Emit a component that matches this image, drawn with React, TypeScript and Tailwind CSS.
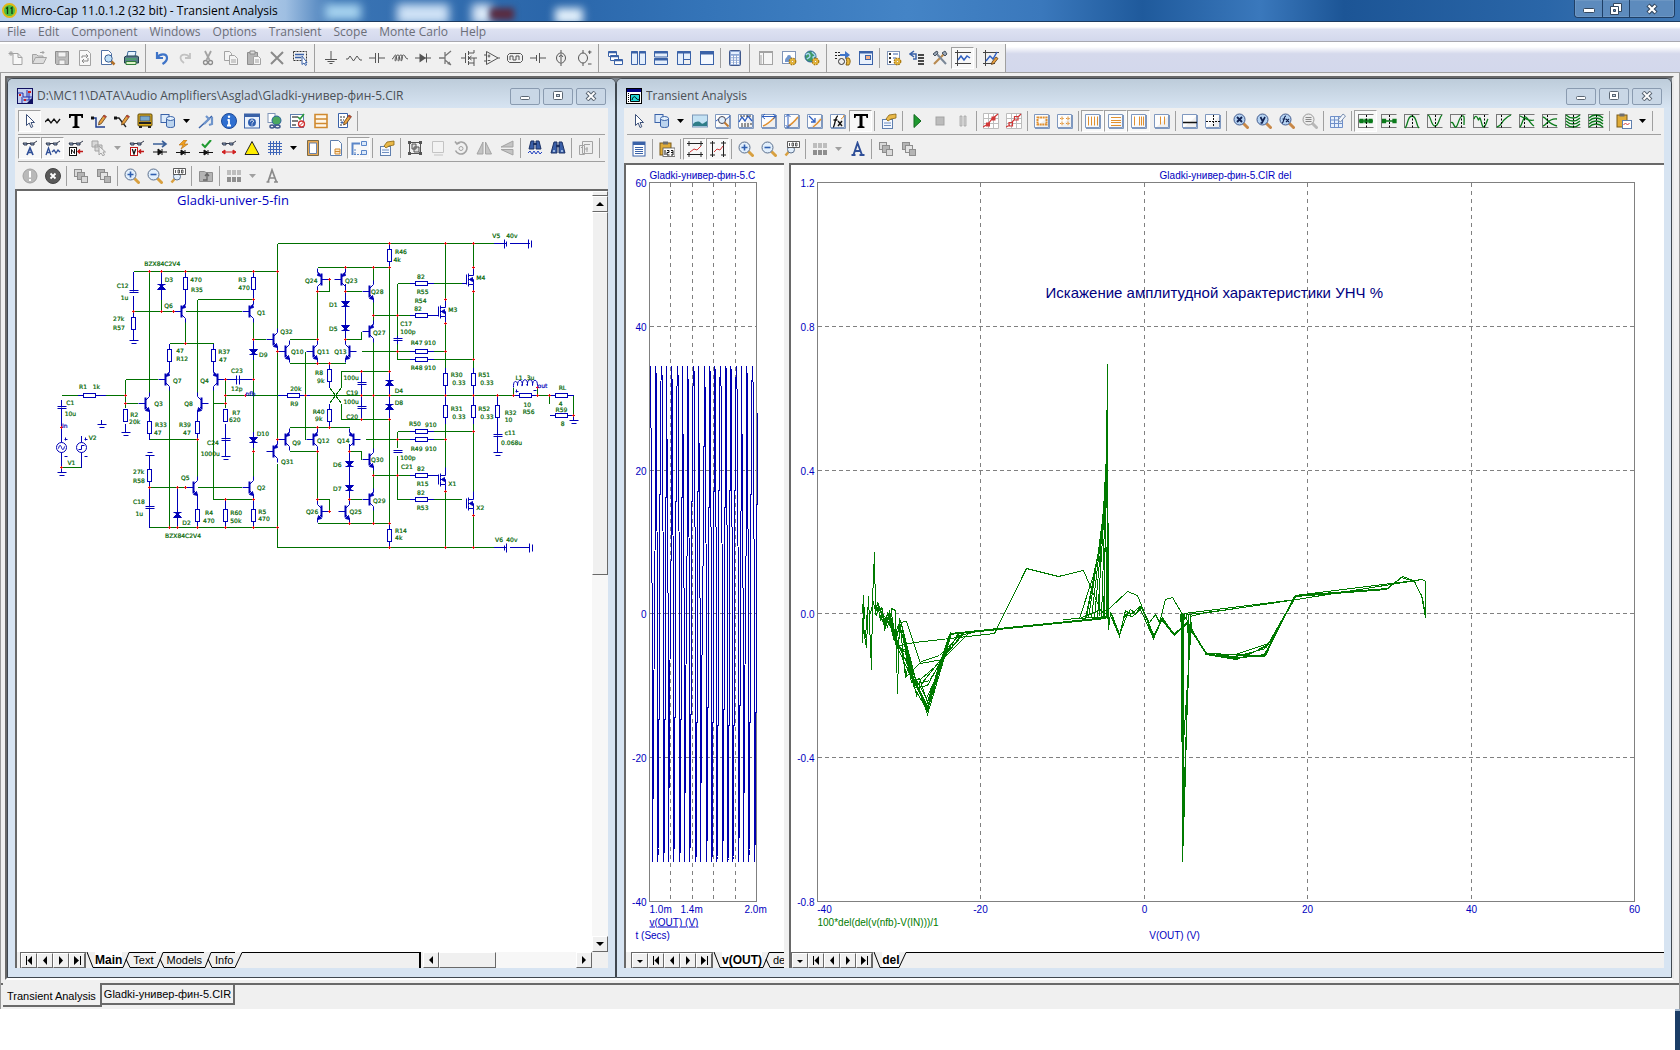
import type { ReactNode } from 'react'
import clsx from 'clsx'

/* ---------- icons, all drawn on a 16x16 grid ---------- */

const GLOBE = (
    <>
        <circle cx="6.5" cy="6.5" r="5.5" fill="#3f9a6a" stroke="#2b5f9e" />
        <path d="M2 5c2-3 4-1 4 1s-2 2-3 3M8 2c1 2 3 2 3 4l-2 1 1 3" fill="none" stroke="#a9d7f5" strokeWidth="1.4" />
    </>
)

const GEAR = (
    <>
        <circle cx="11.5" cy="11.5" r="3" fill="#f0c040" stroke="#b07d10" strokeWidth="1.8" strokeDasharray="1.6 .8" />
        <circle cx="11.5" cy="11.5" r="2.4" fill="#f0c040" />
        <circle cx="11.5" cy="11.5" r="1.1" fill="#fff" stroke="#b07d10" strokeWidth=".6" />
    </>
)

const PENCIL = (
    <>
        <path d="M8 9l5-7 2.4 1.6-5 7L7.6 12z" fill="#e8a040" stroke="#5a3a14" strokeWidth=".8" />
        <path d="M13 2l2.4 1.6-1 1.4-2.4-1.6z" fill="#b8433a" />
    </>
)

const FRAME = <path d="M.5 1.5h14v13H.5zM1 15.5h14.5V2" fill="#fdfdfd" stroke="#7f98bf" />

const GLASSES = <path d="M1 3h4v2H2zM8 3h4v2H9zM5 3.5h3M12 3l3-2" fill="#9ab0d0" stroke="#20283c" strokeWidth=".9" />

const PROPS = (
    <>
        <rect x="1.5" y="6.5" width="10" height="9" fill="#f4f8ff" stroke="#5f7fae" />
        <path d="M3 10h7M3 12.5h7" stroke="#6f8fc0" />
        <path d="M5 6l3-4 7-1v4l-5 1-3 2z" fill="#e8b848" stroke="#8a6410" strokeWidth=".8" />
    </>
)

function magnifier(inner: ReactNode, handle = '#d8a040', rim = '#5b6f8c', glass = '#e2effc') {
    return (
        <>
            <path d="M10.5 10.5l4 4" stroke={handle} strokeWidth="3" strokeLinecap="round" />
            <circle cx="6.5" cy="6.5" r="5.5" fill={glass} stroke={rim} />
            {inner}
        </>
    )
}

function frame(inner: ReactNode) {
    return (
        <>
            {FRAME}
            {inner}
        </>
    )
}

/* green curve with a dashed cursor, used by the cursor-mode buttons */
function curve(d: string, cursor = 8) {
    return (
        <>
            <path d="M.5 1v14M1 14.5h14.5M1 1.5h14.5" stroke="#777" fill="none" />
            <path d={d} stroke="#0a7a1a" strokeWidth="1.3" fill="none" />
            <path d={`M${cursor}.5 2v13`} stroke="#000" strokeDasharray="2 1.5" />
        </>
    )
}

function stack(a: string, b: string) {
    return (
        <>
            <rect x="1.5" y="1.5" width="7" height="7" fill={a} stroke="#8d8d8d" />
            <rect x="4.5" y="4.5" width="7" height="7" fill={b} stroke="#8d8d8d" />
            <rect x="8.5" y="8.5" width="6" height="6" fill={a} stroke="#8d8d8d" />
        </>
    )
}

const G = '#a3a3a3'
const B = '#3a62a8'
const K = '#555'

const ICONS: Record<string, ReactNode> = {
    new: <path d="M5 3.5h5l4 4v7H5zM10 3.5v4h4M3 1v5M.5 3.5h5M1.3 1.8l3.4 3.4M4.7 1.8L1.3 5.2" fill="#f8f8f8" stroke={G} />,
    open: (
        <>
            <path d="M1.5 13.5v-9h4L7 6h5v2" fill="#d4d4d4" stroke={G} />
            <path d="M1.5 13.5l3-6h11l-3 6zM9 2.5h4L11.5 1M13 2.5L11.5 4" fill="#ddd" stroke={G} />
        </>
    ),
    save: (
        <>
            <path d="M1.5 1.5h13v13h-12l-1-1z" fill="#bcbcbc" stroke="#8e8e8e" />
            <path d="M4 2h8v5H4zM5 10h6v4.5H5z" fill="#f2f2f2" stroke={G} />
        </>
    ),
    reload: (
        <>
            <path d="M2.5.5h8l3 3v12h-11z" fill="#f8f8f8" stroke={G} />
            <path d="M5 8V6h5M9 4l2 2-2 2M11 8v3H6M7 9l-2 2 2 2" fill="none" stroke="#888" />
        </>
    ),
    preview: (
        <>
            <path d="M1.5.5h7l3 3v11h-10z" fill="#fff" stroke="#4f6fa3" />
            <path d="M11 11l3.5 3.5" stroke="#b0702a" strokeWidth="2.5" />
            <circle cx="8.5" cy="8.5" r="3.7" fill="#bfe0f8" stroke="#3c5f94" />
        </>
    ),
    print: (
        <>
            <path d="M5 1.5h8l-1 5H4z" fill="#e6f3ff" stroke="#3e6a9a" />
            <path d="M1.5 7l2-1h11l1 1v6h-14z" fill="#5a7a8c" stroke="#23404f" />
            <path d="M3 11.5h10v3H3z" fill="#dff3c8" stroke="#2f7d3a" />
            <path d="M2.5 9h11" stroke="#44c05a" />
        </>
    ),
    undo: <path d="M3 2v6h6M3.5 7.5c2-4 9.5-4.5 9.5.5 0 3-2 4.5-4.5 6" fill="none" stroke="#3f74c8" strokeWidth="2.2" />,
    redo: <path d="M13 3v5H8M12.5 7.5c-2-4-9-4-9 .5 0 2.5 1.5 3.5 3.5 5" fill="none" stroke="#c2c2c2" strokeWidth="1.8" />,
    cut: (
        <>
            <path d="M5 1l4.5 9M11 1L6.500 10" stroke={G} strokeWidth="1.8" fill="none" />
            <path d="M3.5 12.5a2 2 0 104 0 2 2 0 10-4 0M8.500 12.5a2 2 0 104 0 2 2 0 10-4 0" stroke="#8d8d8d" fill="none" strokeWidth="1.3" />
        </>
    ),
    copy: (
        <>
            <path d="M1.5 1.5h5l2 2v7h-7z" fill="#f4f4f4" stroke={G} />
            <path d="M6.500 5.5h5l3 3v6h-8zM8 10h5M8 12h5" fill="#f4f4f4" stroke={G} />
        </>
    ),
    paste: (
        <>
            <path d="M1.5 2.5h10v12h-10z" fill="#b5b5b5" stroke="#8d8d8d" />
            <path d="M4 1h5v3H4z" fill="#ddd" stroke="#8d8d8d" />
            <path d="M7.5 6.5h5l2 2v6h-7zM9 10h4M9 12h4" fill="#f6f6f6" stroke={G} />
        </>
    ),
    delete: <path d="M2 2l12 12M14 2L2 14" stroke="#8a8a8a" strokeWidth="2" />,
    select: (
        <>
            <path d="M1.5 1.5h13v9h-13z" fill="none" stroke="#333" strokeDasharray="2 1" />
            <path d="M3 4.5h9M3 7.5h6" stroke={B} strokeWidth="1.5" />
            <path d="M10 6v8.5l2-1.500 1.500 2.500 1-.5-1-2.500H15z" fill="#fff" stroke={B} />
        </>
    ),
    ground: <path d="M8 1v8M2 9.5h12M4.5 11.5h7M6.500 13.5h3" stroke={K} fill="none" />,
    resistor: <path d="M0 9h2l2-3 3.5 5L11 6l3 4h2" stroke={K} fill="none" />,
    capacitor: <path d="M0 8h6M10 8h6M6.500 3v10M9.500 3v10" stroke={K} fill="none" />,
    inductor: <path d="M0 9c2 0 2-4 3.5-4s1 6 0 6 0-6 2.5-6 1.500 6 .5 6 0-6 2.5-6 1 6 .3 6 0-6 2.200-6S13 9 16 9" stroke={K} fill="none" />,
    diode: (
        <>
            <path d="M0 8h16M11.5 3.5v9" stroke={K} />
            <path d="M4.5 3.5v9L11 8z" fill={K} />
        </>
    ),
    bjt: (
        <>
            <path d="M1 8h6M7 2v12M7 6l6-5M7 10l6 5" stroke="#777" fill="none" strokeWidth="1.3" />
            <path d="M13 15l-4-1 2.5-2.500z" fill="#777" />
        </>
    ),
    mosfet: <path d="M0 8h4.500M4.500 3v10M7.500 1v4M7.500 6v4M7.500 11v4M8 3h5V0M8 13h5v3M8 8h8M13 8v5M10.500 6L8 8l2.500 2" stroke={K} fill="none" />,
    opamp: <path d="M2.500 1.500v13L14 8zM0 5h3M0 11h3M14 8h2M5 4.500v3M3.700 6h2.600M3.700 10.500h2.600" stroke={K} fill="none" />,
    pulse: <path d="M.5 5.500l2-2h11l2 2v5l-2 2h-11l-2-2zM3 10V6h3v4h3V6h3v4" stroke={K} fill="none" />,
    battery: <path d="M0 8h6M10 8h6M6.500 5v6M9.500 3v10" stroke={K} fill="none" />,
    isource: <path d="M8 0v3M8 13v3M3.500 8a4.500 5 0 109 0 4.500 5 0 10-9 0M8 12V5M6 7l2-2.500L10 7" stroke={K} fill="none" />,
    vsource: <path d="M7 0v3M7 13v3M2.500 8a4.500 5 0 109 0 4.500 5 0 10-9 0M12 2h3.500M13.700.5v3.500M12 14h3.500" stroke={K} fill="none" />,
    cascade: (
        <>
            <path d="M1.500 1.500h8v5h-8zM3.500 5.500h8v5h-8zM7.500 9.500h8v5h-8z" fill="#fff" stroke={B} />
            <path d="M1.500 2.500h8M3.500 6.500h8M7.500 10.500h8" stroke={B} strokeWidth="1.500" />
        </>
    ),
    tileV: (
        <>
            <path d="M1.500 1.500h6v13h-6zM9.500 1.500h6v13h-6z" fill="#e4eefb" stroke={B} />
            <path d="M1 2.500h7M9 2.500h7" stroke={B} strokeWidth="2" />
        </>
    ),
    tileH: (
        <>
            <path d="M1.500 1.500h13V7h-13zM1.500 8.500h13v6h-13z" fill="#e4eefb" stroke={B} />
            <path d="M1 2.500h14M1 9.500h14" stroke={B} strokeWidth="2" />
        </>
    ),
    overlap: (
        <>
            <path d="M1.500 1.500h6v13h-6zM7.500 1.500h7v8h-7z" fill="#e4eefb" stroke={B} />
            <path d="M1.500 14.500h13v-5" fill="none" stroke={B} />
            <path d="M1 2.500h14" stroke={B} strokeWidth="2" />
        </>
    ),
    maximize: (
        <>
            <rect x="1.500" y="1.500" width="13" height="13" fill="#f4f8fe" stroke={B} />
            <path d="M1 3h14" stroke={B} strokeWidth="3" />
        </>
    ),
    calc: (
        <>
            <rect x="2.500" y=".5" width="11" height="15" rx="1" fill="#8ea8d4" stroke="#41598c" />
            <path d="M4 3h8" stroke="#e4f0ff" strokeWidth="2" />
            <path d="M4 6.500h8M4 9h8M4 11.500h8M4 13.500h8" stroke="#fff" strokeWidth="1.400" strokeDasharray="2 1" />
        </>
    ),
    sidebar: (
        <>
            <rect x="1.500" y="1.500" width="13" height="13" fill="#f6f6f6" stroke={G} />
            <path d="M1 2.500h14M5.500 3v12M3 5v9" stroke={G} />
        </>
    ),
    partGear: (
        <>
            <rect x="1.500" y="1.500" width="13" height="12" fill="#fff" stroke="#8095b8" />
            <path d="M4 12c0-4 1-4 2-5a2 2 0 114 0c1 1 2 1 2 5z" fill="#6f95cc" />
            {GEAR}
        </>
    ),
    globeGear: (
        <>
            {GLOBE}
            {GEAR}
        </>
    ),
    run: (
        <>
            <path d="M0 2.500h5M0 5.500h5M0 8.500h3" stroke="#222" strokeDasharray="2 1" />
            <path d="M5 4h5V1l5 4-5 4V6H5z" fill="#3f74c8" />
            <circle cx="6.500" cy="11.500" r="3" fill="#eee" stroke="#333" />
            <path d="M11 8h3c2 3 1 5 0 7h-3c1-3 1-4 0-7z" fill="#e8b840" stroke="#8a6410" />
        </>
    ),
    windowDot: (
        <>
            <rect x="1.500" y="1.500" width="13" height="13" fill="#e9f1fc" stroke={B} />
            <path d="M1 2.500h14" stroke={B} strokeWidth="2" />
            <rect x="7.500" y="5.500" width="5" height="4" fill="#f4b088" stroke={B} />
        </>
    ),
    listGear: (
        <>
            <rect x="1.500" y="1.500" width="12" height="13" fill="#fff" stroke="#8095b8" />
            <path d="M3 4h2M3 8h2M3 12h2" stroke="#333" strokeWidth="2" />
            <path d="M7 4h5M7 8h3" stroke={B} />
            {GEAR}
        </>
    ),
    back: (
        <>
            <path d="M5 1L1 4l4 3M2 4h5v5H4" stroke={B} strokeWidth="1.500" fill="none" />
            <path d="M9 5h6M9 8h6M9 11h6M9 14h6" stroke="#111" strokeWidth="1.300" />
        </>
    ),
    tools: (
        <>
            <path d="M2 14L12 4" stroke="#b88a50" strokeWidth="2.200" />
            <path d="M3 2l11 12" stroke="#7a8797" strokeWidth="2" />
            <path d="M1 4l4-3 1 2-3 3zM10 3l3-2 2 3-2 2z" fill="#9aa6b6" stroke="#485462" />
        </>
    ),
    plot: (
        <>
            <path d="M2.500 0v16M0 2.500h16M0 13.500h16" stroke="#444" fill="none" />
            <path d="M3 10l3-4 3 4 3-4 3 2" stroke="#2f5fc0" fill="none" strokeWidth="1.500" />
        </>
    ),
    plotEdit: (
        <>
            <path d="M2.500 0v16M0 2.500h16M0 13.500h12" stroke="#444" fill="none" />
            <path d="M3 11l4-5 3 3 4-7" stroke="#2f5fc0" fill="none" strokeWidth="1.500" />
            <path d="M9 12l4-5 2 1.500-4 5-2.500 1z" fill="#e8a040" stroke="#5a3a14" strokeWidth=".8" />
        </>
    ),
    cursor: <path d="M4.500 1.500v11l2.700-2.500 1.800 4.500 1.800-.8L9 9.500h3.500z" fill="#fff" stroke="#3b4f78" />,
    wire: <path d="M0 9l3-3 3 4 3-4 3 4 3-4" stroke="#111" fill="none" strokeWidth="1.300" />,
    text: <path d="M1 1h14v4h-1.500L13 3h-3.500v10l2 .8V15h-7v-1.200l2-.8V3H3l-.5 2H1z" fill="#000" />,
    wirePencil: (
        <>
            <path d="M1 5h4v9h9" stroke="#1f3f90" fill="none" strokeWidth="1.500" />
            <path d="M0 3.500h3v3H0z" fill="#111" />
            {PENCIL}
        </>
    ),
    linePencil: (
        <>
            <path d="M1 5h4l3 4 4 5" stroke="#222" fill="none" strokeWidth="1.300" />
            <path d="M0 3.500h3v3H0z" fill="#111" />
            {PENCIL}
        </>
    ),
    bus: (
        <>
            <rect x="1" y="1" width="14" height="12" rx="1" fill="#e0b020" stroke="#5c4708" />
            <rect x="3" y="3" width="10" height="5" fill="#78a8cc" stroke="#444" strokeWidth=".7" />
            <path d="M2 10h12" stroke="#222" strokeWidth="2" />
            <path d="M2 13h3v2H2zM11 13h3v2h-3z" fill="#222" />
        </>
    ),
    shapes: (
        <>
            <rect x="1" y="1.500" width="8" height="8" fill="#dceafa" stroke={B} />
            <path d="M6.500 6v7c0 2 8 2 8 0V5" fill="#bcd4ee" stroke={B} />
            <ellipse cx="10.500" cy="5.500" rx="4" ry="2" fill="#e6f2fd" stroke={B} />
        </>
    ),
    flag: (
        <>
            <path d="M1 15L14 3" stroke="#3a62a8" strokeWidth="1.500" />
            <path d="M8 3l3 3-5 5M11 12l3-1V4" stroke="#6f95cc" fill="none" strokeWidth="2.200" />
        </>
    ),
    info: (
        <>
            <circle cx="8" cy="8" r="7.500" fill="#2f6fd0" stroke="#1d4a98" />
            <path d="M8 6.500v6M6.500 7h2M6 12.500h4" stroke="#fff" strokeWidth="1.800" />
            <circle cx="8" cy="3.800" r="1.200" fill="#fff" />
        </>
    ),
    help: (
        <>
            <rect x=".5" y="1" width="15" height="14" fill="#e9f1fc" stroke={B} />
            <path d="M.5 2.500h15" stroke={B} strokeWidth="3" />
            <circle cx="8" cy="9.500" r="4" fill="#2f5fb0" />
            <path d="M6.500 8.500c0-2 3-2 3 0 0 1-1.500 1-1.500 2M8 11.500v1" stroke="#fff" fill="none" />
        </>
    ),
    globeLink: (
        <>
            <rect x="1" y=".5" width="7" height="9" fill="#fff" stroke="#8095b8" />
            <circle cx="9.500" cy="7.500" r="4.500" fill="#4aa860" stroke="#2b5f9e" />
            <path d="M3 13.500c0-2 4-2 4 0s-4 2-4 0M8 13.500c0-2 5-2 5 0s-5 2-5 0" fill="none" stroke="#41598c" strokeWidth="1.500" />
        </>
    ),
    checkList: (
        <>
            <rect x=".5" y="1.500" width="13" height="13" fill="#fff" stroke="#5f7fae" />
            <path d="M2 4h6M2 8h6M2 12h4" stroke="#555" strokeWidth="1.300" />
            <path d="M8 4l2 2 4-5" stroke="#2a9a3a" fill="none" strokeWidth="1.600" />
            <circle cx="11.500" cy="11" r="3" fill="#fff" stroke="#d03030" strokeWidth="1.300" />
            <path d="M9.500 13l4-4" stroke="#d03030" />
        </>
    ),
    rows: <path d="M2 1.500h12v13H2zM2 6h12M2 10.500h12" fill="#fff6e8" stroke="#d08a30" strokeWidth="1.600" />,
    docPencil: (
        <>
            <path d="M2.500.5h9v14h-9z" fill="#fff" stroke={B} />
            <path d="M4 4h6M4 7h4M4 12h3" stroke="#333" strokeDasharray="2 1" />
            <path d="M6 8v3M4.500 9.500h3" stroke={B} />
            {PENCIL}
        </>
    ),
    glassesA: (
        <>
            {GLASSES}
            <path d="M5 15l3-7 3 7M6.300 12.500h3.500" stroke="#2f4f98" fill="none" strokeWidth="1.700" />
        </>
    ),
    glassesAw: (
        <>
            {GLASSES}
            <path d="M1 15l2.500-7L6 15M2 12.500h3M7 12l2-2 2 3 2-3 2 2" stroke="#2f4f98" fill="none" strokeWidth="1.300" />
        </>
    ),
    glassesN: (
        <>
            {GLASSES}
            <rect x="1.500" y="7.500" width="7" height="8" fill="#fff" stroke="#111" />
            <path d="M3.500 14V9.500l3 4V9" stroke="#111" fill="none" />
            <path d="M15 11.500h-5M12 9.500l-2 2 2 2" stroke="#c01818" fill="none" strokeWidth="1.500" />
        </>
    ),
    glassesV: (
        <>
            {GLASSES}
            <rect x="1.500" y="7.500" width="7" height="8" fill="#fff" stroke="#c01818" />
            <path d="M3.300 9L5 14l1.700-5" stroke="#111" fill="none" strokeWidth="1.300" />
            <path d="M15 11.500h-5M12 9.500l-2 2 2 2" stroke="#c01818" fill="none" strokeWidth="1.500" />
        </>
    ),
    ghostCursor: (
        <>
            <path d="M1 1h6v6H1zM4 5h7v6H4z" fill="#d8d8d8" stroke={G} />
            <path d="M8 6v9l2-2 2 3 1.500-1-1.500-3h2.500z" fill="#eee" stroke={G} />
        </>
    ),
    current: (
        <>
            <path d="M1 4h12M10 1l4 3-4 3" stroke="#3a5f98" fill="none" strokeWidth="1.600" />
            <path d="M1 12h14M10 9v6M6 9l4 3-4 3z" stroke="#111" fill="#111" />
        </>
    ),
    power: (
        <>
            <path d="M9 0L4 5h4L6 9l7-5H9l3-4z" fill="#f0a020" stroke="#b06a10" strokeWidth=".6" />
            <path d="M1 12.500h14M10 10v5M6 10l4 2.500L6 15z" stroke="#111" fill="#111" />
        </>
    ),
    condition: (
        <>
            <path d="M4 4l3 3 6-7" stroke="#1f9a30" fill="none" strokeWidth="2" />
            <path d="M1 12.500h14M10 10v5M6 10l4 2.500L6 15z" stroke="#111" fill="#111" />
        </>
    ),
    pins: (
        <>
            {GLASSES}
            <path d="M1.500 12h13M4 10l-3 2 3 2zM12 10l3 2-3 2z" stroke="#d02020" fill="#d02020" />
        </>
    ),
    warning: <path d="M8 1.500L15 14.500H1z" fill="#ffee00" stroke="#222" />,
    grid: <path d="M1 3.500h14M1 6.500h14M1 9.500h14M1 12.500h14M3.500 1v14M6.500 1v14M9.500 1v14M12.500 1v14" stroke="#3f66b8" />,
    page: (
        <>
            <path d="M2.500.5h11v15h-11z" fill="#e8a850" stroke="#7a6a4a" />
            <path d="M4.500 3h7v10.500h-7z" fill="#fff" stroke="#6a84ae" />
        </>
    ),
    pageBlock: (
        <>
            <path d="M2.500.5h8l3 3v12h-11z" fill="#fff" stroke="#5f7fae" />
            <path d="M7 9h5v5H7zM7 11.500h5" fill="#ffe8c8" stroke="#d08a30" />
        </>
    ),
    region: (
        <>
            <path d="M1.500 15V3.500H9" stroke="#5b86c8" fill="none" strokeWidth="2" />
            <path d="M10.500 1.500h5v4h-5zM10.500 10.500h5v4h-5z" fill="#dceafa" stroke="#5b86c8" />
            <path d="M3 14.500h8M4 9v6" stroke="#5b86c8" strokeDasharray="2 1" />
        </>
    ),
    props: PROPS,
    group: (
        <>
            <path d="M2.500 2.500h11v11h-11z" fill="none" stroke="#555" />
            <path d="M5 4h4v5H5zM7 7h5v5H7z" fill="#ddd" stroke="#555" />
            <path d="M1 1h3v3H1zM12 1h3v3h-3zM1 12h3v3H1zM12 12h3v3h-3z" fill="#555" />
        </>
    ),
    blank: <path d="M2.500 1.500h11v11h-11zM4 15h9" fill="#f3f3f3" stroke="#c4c4c4" />,
    rotate: (
        <>
            <path d="M4 3.500a6 6 0 11-1.500 7M2 1.500L4 4l3-1.500" fill="none" stroke={G} strokeWidth="1.600" />
            <circle cx="8" cy="8.500" r="2" fill="none" stroke={G} />
        </>
    ),
    flipH: <path d="M7 2v12H1zM9.500 2v12h6z" fill="#c4c4c4" stroke={G} />,
    flipV: <path d="M14 7V1L2 7zM14 9.500V15L2 9.500z" fill="#c4c4c4" stroke={G} />,
    findText: (
        <>
            <path d="M4 1h3v8H2zM9 1h3l2 8H9z" fill="#3a5fa8" stroke="#1d3264" />
            <path d="M6 4h4" stroke="#1d3264" strokeWidth="2" />
            <path d="M1 13l2-2 2 3 2-3 2 3 2-3 2 3 2-2" fill="none" stroke="#2040c0" />
        </>
    ),
    find: (
        <>
            <path d="M4 2h3v11H1zM9 2h3l3 11H9z" fill="#3a5fa8" stroke="#1d3264" />
            <path d="M6 6h4" stroke="#1d3264" strokeWidth="2.500" />
            <path d="M3 11h2M11 11h2" stroke="#bcd4ee" strokeWidth="1.500" />
        </>
    ),
    script: <path d="M4.500 1.500h10v12h-10zM6 4.500h6M9 7v5M6 9h4M1.500 5.500h5v9h-5zM3 7.500h2" fill="#eee" stroke={G} />,
    alert: (
        <>
            <circle cx="8" cy="8" r="7" fill="#b9b9b9" stroke="#a0a0a0" />
            <path d="M8 3v6.500M8 11v2" stroke="#fff" strokeWidth="2" />
        </>
    ),
    stopX: (
        <>
            <circle cx="8" cy="8" r="7.500" fill="#5a5a5a" stroke="#444" />
            <path d="M5.500 5.500l5 5M10.500 5.500l-5 5" stroke="#fff" strokeWidth="1.800" />
        </>
    ),
    front: stack('#dadada', '#b4b4b4'),
    behind: stack('#b4b4b4', '#e4e4e4'),
    zoomIn: magnifier(<path d="M3.500 6.500h6M6.500 3.500v6" stroke="#2f5fb0" strokeWidth="1.600" />),
    zoomOut: magnifier(<path d="M3.500 6.500h6" stroke="#2f5fb0" strokeWidth="1.600" />),
    zoom100: (
        <>
            <path d="M5 10.500L1.500 14.500" stroke="#d8a040" strokeWidth="2.500" />
            <circle cx="7" cy="8.500" r="3.500" fill="#e2effc" stroke="#5b6f8c" />
            <path d="M3.500.5h12v6h-12zM5.500 2v3M8 2h1.500v3H8zM11.500 2H13v3h-1.500z" fill="#fff" stroke="#333" strokeWidth=".8" />
        </>
    ),
    folderUp: (
        <>
            <path d="M1.500 3.500h5l1.500 1h6.500v9h-13z" fill="#b4b4b4" stroke="#8f8f8f" />
            <path d="M5 12h4V6M7 8l2-2.500L11 8" fill="none" stroke="#666" strokeWidth="1.300" />
        </>
    ),
    palette: (
        <>
            <path d="M1 2h4v5H1zM6 2h4v5H6zM11 2h4v5h-4z" fill="#bdbdbd" />
            <path d="M1 9h4v5H1zM6 9h4v5H6zM11 9h4v5h-4z" fill="#8f8f8f" />
        </>
    ),
    fontGray: <path d="M2.500 14h3M10 14h4M4 14L8 2l4.500 12M5.500 10h5" fill="none" stroke="#8a8a8a" strokeWidth="1.700" />,
    fontBlue: <path d="M1.500 14h4M9.500 14h5M3.500 14L7.500 2l4.500 12M5 10h5.500" fill="none" stroke="#2f4f98" strokeWidth="1.900" />,
    picture: (
        <>
            <rect x=".5" y="2" width="15" height="12" fill="#c4e2f4" stroke="#7a97b8" />
            <path d="M1 11c3-3 6-3 8-1s4-1 6-2v5H1z" fill="#2f7d88" />
        </>
    ),
    zoomWave: frame(
        <>
            <path d="M1 8l4-3 4 3 6-5" stroke="#2f5fc0" fill="none" />
            <circle cx="7" cy="7" r="3.500" fill="#e2effc" stroke="#445" />
            <path d="M9.500 9.500l4 4" stroke="#c07a30" strokeWidth="2" />
        </>,
    ),
    waveGrid: frame(
        <>
            <path d="M1 9l3-5 3 4 3-5 4 5" stroke="#2f5fc0" fill="none" strokeWidth="1.300" />
            <path d="M2 3h12M3 11h11M3 13h8" stroke="#333" strokeDasharray="2 1" />
        </>,
    ),
    scaleX: frame(
        <>
            <path d="M2 13C5 12 9 9 14 4" stroke="#e09030" fill="none" strokeWidth="1.500" />
            <path d="M1 3.500h14M4 1L1 3.500 4 6M12 1l3 2.500L12 6" stroke="#2f5fc0" fill="none" />
        </>,
    ),
    scaleY: frame(
        <>
            <path d="M4 13C7 12 10 9 14 4" stroke="#e09030" fill="none" strokeWidth="1.500" />
            <path d="M4 1.500v13M1.500 4L4 1.500 6.500 4M1.500 12L4 14.500 6.500 12" stroke="#2f5fc0" fill="none" />
        </>,
    ),
    scaleXY: frame(
        <>
            <path d="M6 14c3-2 5-4 8-8" stroke="#e09030" fill="none" strokeWidth="1.500" />
            <path d="M2 3l6 6M8 5v4H4" stroke="#2f5fc0" fill="none" strokeWidth="1.300" />
        </>,
    ),
    fx: frame(
        <>
            <path d="M3 14c2 0 2-11 5-11M3.500 7h4M8 8l4 5M12 8l-4 5" stroke="#111" fill="none" strokeWidth="1.400" />
            <path d="M11 6c2-1 3-3 3-4" stroke="#e09030" fill="none" />
        </>,
    ),
    play: <path d="M5 1.500v13L12 8z" fill="#1f9a30" stroke="#136a20" />,
    stop: <rect x="4" y="4" width="8" height="8" fill="#bcbcbc" stroke={G} />,
    pause: <path d="M5 3h2v10H5zM9 3h2v10H9z" fill="#d4d4d4" stroke={G} strokeWidth=".8" />,
    pointsA: (
        <>
            <path d="M.5.5h15v15H.5zM5.500 0v16M10.500 0v16M0 5.500h16M0 10.500h16" fill="#fff" stroke="#bdbdbd" />
            <path d="M0 14l5-3 4-5 6-5" stroke="#d03838" fill="none" strokeWidth="1.200" />
            <path d="M3 9.500h4v4H3zM8.500 3.500h4v4h-4z" fill="#d03838" />
        </>
    ),
    pointsB: (
        <>
            <path d="M.5.5h15v15H.5zM5.500 0v16M10.500 0v16M0 5.500h16M0 10.500h16" fill="#fff" stroke="#bdbdbd" />
            <path d="M0 14l4-2M6 9l3-3M12 4l3-3M3 9.500h3.500V13H3zM8.500 3.500H12V7H8.500z" stroke="#d03838" fill="none" strokeWidth="1.200" />
        </>
    ),
    frameSolid: frame(<path d="M3.500 4.500h9v7h-9z" fill="none" stroke="#e09030" strokeWidth="2" strokeDasharray="2 .6" />),
    framePlus: frame(<path d="M3 5.500h4M5 3.500v4M9 5.500h4M11 3.500v4M3 10.500h4M5 8.500v4M9 10.500h4M11 8.500v4" stroke="#e09030" strokeDasharray="1.500 .7" />),
    barsV: frame(<path d="M3.500 3.500v9M6.500 3.500v9M9.500 3.500v9M12.500 3.500v9" stroke="#e09030" />),
    barsH: frame(<path d="M3 4.500h10M3 7.500h10M3 9.500h10M3 12.500h10" stroke="#e09030" />),
    barsGap: frame(<path d="M3.500 3.500v9M8.500 3.500v9M10.500 3.500v9M12.500 3.500v9" stroke="#e09030" />),
    barsWide: frame(<path d="M6.500 3.500v8M10.500 3.500v8" stroke="#e09030" />),
    baseline: frame(<path d="M1 9.500h14" stroke="#111" strokeWidth="1.500" />),
    crosshair: frame(<path d="M1 8.500h14M8.500 2v12" stroke="#111" strokeDasharray="2 1" />),
    markX: magnifier(<path d="M4 4l5 5M9 4L4 9" stroke="#102050" strokeWidth="1.900" />, '#c88848', '#41598c', '#b4d2f2'),
    markY: magnifier(<path d="M4.500 4l2 4M9 4l-3 6H4.500" stroke="#102050" strokeWidth="1.700" fill="none" />, '#c88848', '#41598c', '#b4d2f2'),
    markF: magnifier(<path d="M3 10c2 0 1.500-7 4-7M3.500 6h3M7 6l3 3M10 6L7 9" stroke="#102050" strokeWidth="1.200" fill="none" />, '#c88848', '#41598c', '#b4d2f2'),
    markOff: magnifier(<path d="M3.500 4.500h6M3.500 6.500h6M3.500 8.500h6" stroke="#888" />, '#b8b8b8', '#9a9a9a', '#ececec'),
    tableEdit: (
        <>
            <path d="M.5 3.500h12v11H.5zM.5 7h12M.5 10.500h12M4.500 3.500v11M8.500 3.500v11" fill="#e6f0fc" stroke="#6f8fc8" />
            <path d="M8 7l5-6 2.500 2-5 6z" fill="#f2f6fc" stroke="#7a8fb0" />
        </>
    ),
    curDots: curve('M1 8h14M2 6.500h3v3H2zM11 6.500h3v3h-3zM7 6.500h2v3H7z'),
    curLink: curve('M1 8h14M1.500 6.500h3v3h-3zM12 6.500h3v3h-3z'),
    curPeak: curve('M1 15c3-2 2-12 7-12s4 10 7 12'),
    curValley: curve('M1 2c3 1 3 11 7 11s4-9 7-11'),
    curHigh: curve('M1 10c2-3 3 5 5 4s3-10 6-11 2 3 2 9', 11),
    curLow: curve('M1 6c1-4 3-3 4 0s1-2 2-1 2 10 4 9 3-7 4-8', 11),
    curSlope: curve('M1 14c4-1 5-5 7-7s4-4 7-5', 5),
    curInf: curve('M1 14c2-2 3-9 5-10s5 7 9 9M1 3c5 2 9 6 14 4', 5),
    curCross: curve('M1 13c4-1 5-8 14-7M1 4c4 1 5 7 14 9', 5),
    curBot: curve('M1 2c4 4 10 4 14 0M1 5c4 4 10 4 14 0M1 8c4 4 10 4 14 0M1 11c4 4 10 4 14 0'),
    curTop: curve('M1 5c4-4 10-4 14 0M1 8c4-4 10-4 14 0M1 11c4-4 10-4 14 0M1 14c4-4 10-4 14 0'),
    pasteChart: (
        <>
            <rect x="1" y="2" width="10" height="12" fill="#e0ac38" stroke="#7a5a18" />
            <rect x="3.500" y=".5" width="5" height="3" fill="#6f6f6f" />
            <rect x="6.500" y="7.500" width="9" height="8" fill="#fff" stroke="#5f7fae" />
            <path d="M7.500 12l2-2 2 2 2-2" stroke="#d03838" fill="none" />
        </>
    ),
    pasteNum: (
        <>
            <rect x="1" y="2" width="11" height="12" fill="#e0ac38" stroke="#7a5a18" />
            <rect x="4" y=".5" width="5" height="3" fill="#6f6f6f" />
            <rect x="4" y="7" width="12" height="8.500" fill="#fff" stroke="#555" strokeWidth=".8" />
            <path d="M6 9v5M8 9.500h2v2H8v2.500h2.500M12 9.500h2V14h-2M12 11.500h2" stroke="#111" fill="none" />
        </>
    ),
    listDoc: (
        <>
            <rect x="2" y="1" width="12" height="14" fill="#fff" stroke={B} />
            <path d="M2 2.500h12" stroke={B} strokeWidth="3" />
            <path d="M4 6.500h8M4 8.500h8M4 10.500h8M4 12.500h8" stroke={B} />
        </>
    ),
    tagH: (
        <>
            <path d="M0 2.500h16M0 13.500h16M2 0v5M14 0v5M2 11v5M14 11v5" stroke="#222" fill="none" />
            <path d="M3 11l4-3 3 1 4-4" stroke="#d03838" fill="none" />
        </>
    ),
    tagV: (
        <>
            <path d="M2.500 0v16M13.500 0v16M0 2h5M11 2h5M0 14h5M11 14h5" stroke="#222" fill="none" />
            <path d="M4 11l3-3 3 1 3-4" stroke="#d03838" fill="none" />
        </>
    ),
}

/* ---------- toolbars ---------- */
// '|' is a separator, 'v' a drop-down arrow ('-v' when disabled), a leading '*' marks a pressed button

const MAIN_BAR = [
    'new open save reload preview print',
    'undo redo cut copy paste delete select',
    'ground resistor capacitor inductor diode bjt mosfet opamp pulse battery isource vsource',
    'cascade tileV tileH overlap maximize | calc',
    'sidebar partGear globeGear',
    'run windowDot | listGear back tools *plot | plotEdit',
]

const CIRCUIT_BARS = [
    '*cursor wire text wirePencil linePencil bus shapes v flag info help globeLink checkList rows docPencil |',
    '*glassesA *glassesAw glassesN ghostCursor -v glassesV current power condition pins warning grid v page pageBlock *region | props | group blank rotate flipH flipV | findText find | script |',
    'alert stopX | front behind | zoomIn zoomOut zoom100 | folderUp | palette -v fontGray',
]

const ANALYSIS_BARS = [
    'cursor shapes v picture zoomWave waveGrid scaleX scaleY scaleXY fx *text | props | play stop pause | pointsA pointsB | frameSolid framePlus | *barsV *barsH *barsGap barsWide | baseline crosshair | markX markY markF markOff | tableEdit | *curDots curLink curPeak curValley curHigh curLow curSlope curInf curCross curBot curTop | pasteChart v |',
    'listDoc | pasteNum | *tagH *tagV | zoomIn zoomOut zoom100 | palette -v fontBlue | front behind',
]

function Tools({ items }: { items: string }) {
    return (
        <>
            {items.split(' ').map((item, i) => {
                if (item === '|') {
                    return <span key={i} className="mx-[2px] h-5 w-px shrink-0 bg-[#a0a0a0]" />
                }
                if (item === 'v' || item === '-v') {
                    return (
                        <button key={i} aria-label="More" className="flex h-[22px] w-[15px] shrink-0 items-center justify-center">
                            <svg width="7" height="4">
                                <path d="M0 0h7L3.500 4z" fill={item === 'v' ? '#000' : '#a0a0a0'} />
                            </svg>
                        </button>
                    )
                }
                const pressed = item.startsWith('*')
                const name = pressed ? item.slice(1) : item
                return (
                    <button
                        key={i}
                        aria-label={name}
                        className={clsx(
                            'flex h-[22px] w-[23px] shrink-0 items-center justify-center',
                            pressed && 'border border-t-[#a0a0a0] border-r-white border-b-white border-l-[#a0a0a0] bg-[#f8f8f8]',
                        )}
                    >
                        <svg width="16" height="16" viewBox="0 0 16 16">
                            {ICONS[name]}
                        </svg>
                    </button>
                )
            })}
        </>
    )
}

function ToolRows({ rows }: { rows: string[] }) {
    return (
        <div className="bg-[#f0f0f0] px-[3px]">
            {rows.map((row, i) => (
                <div
                    key={row}
                    className={clsx('flex h-[27px] items-center overflow-hidden', i < rows.length - 1 && 'border-b border-[#a0a0a0]')}
                >
                    <Tools items={row} />
                </div>
            ))}
        </div>
    )
}

/* ---------- schematic, in grid units of 4px ---------- */

const U = 4
const WIRE = '#007000'
const PART = '#0000b8'

const WIRES = `18,7 54,7|54,0 54,22|54,27 54,50|54,55 54,76|22,7 22,38|25,14 25,17|31,19 31,25|34,14 48,14|34,14 34,38|18,17 28,17|31,17 45,17
48,19 48,25|48,29 48,47|48,51 48,59|48,24 51,24|57,24 64,24|57,30 71,30|61,27 61,49|64,12 64,25|64,12 67,12 67,9|64,6 82,6|71,12 75,12
78,6 78,10|78,14 78,20|78,24 78,52|78,56 78,62|78,66 78,70|78,18 87,18|71,24 75,24 75,22|75,27 87,27|84,10 84,23|84,25 84,29|84,10 87,10
84,29 87,29|93,10 100,10|92,27 96,27|92,29 103,29|70,36 70,32 82,32|70,40 70,44 82,44|67,35 67,36 70,40|67,40 70,36
82,6 82,33|82,44 82,70|54,0 108,0|96,0 96,14|96,20 96,32|103,0 103,6|103,12 103,32|96,36 96,40|103,36 103,40|84,47 87,47|92,47 103,47
76,49 87,49|92,49 96,49|84,47 84,51|84,53 84,64 87,64|78,58 87,58|93,64 100,64|96,44 96,57|96,62 96,76|103,44 103,63|103,68 103,76
8,38 16,38|16,34 24,34|16,34 16,41|16,40 19,40|0,38 4,38|0,56 5,56|27,25 38,25|27,36 27,71|46,34 48,34|41,34 41,41|41,38 56,38|60,38 114,38
38,36 38,64 48,64|38,40 41,40|22,49 34,49|34,47 34,59|22,61 31,61|34,61 45,61|22,71 54,71|54,76 108,76|72,52 75,52 75,54|72,64 75,64
57,46 72,46|57,52 64,52|64,51 64,65|64,64 67,64 67,67|64,70 82,70|113,38 113,36|119,38 119,36|118,38 123,38|122,38 122,40|127,38 128,38 128,44`

const DOTS = `22,7 25,7 31,7 48,7 54,7 18,17 25,17 28,17 48,14 31,25 48,24 54,27 64,24 64,30 67,30 64,12 71,6 78,6 82,6 67,9 71,12 71,24 78,18 84,18
82,0 96,0 103,0 96,14 96,20 103,6 103,12 96,27 103,29 84,27 75,32 82,32 78,38 82,38 75,38 61,38 96,38 103,38 109,38 113,38 119,38 122,38
119,36 128,43 16,38 16,40 41,34 41,40 41,38 48,34 46,38 0,46 0,56 34,49 48,52 54,49 54,71 22,61 29,61 31,61 27,71 29,71 34,71 41,71 48,71
41,64 48,64 64,46 67,46 64,52 72,52 64,64 72,64 67,67 72,70 78,70 82,70 75,44 82,44 84,49 84,58 78,58 96,49 103,47 96,62 103,68 82,76 96,76 103,76`

// body centres
const RES_V = `31,10 48,10 18,20 27,28 38,28 16,43 22,46 34,46 41,43 22,58 34,68 41,68 48,68 67,33 67,43 82,3 82,73 96,34 103,34 96,42 103,42 109,42`
const RES_H = `7,38 58,38 90,10 90,18 90,27 90,29 90,47 90,49 90,58 90,64 116,38 125,38 125,43`
const CAP_V = `18,12 0,41 41,49 22,66 75,35 75,41 84,24 84,52 109,48`
const DIODE_DOWN = `48,27 48,49 71,15 71,21 72,55 72,61`
const DIODE_UP = `25,11 29,68 82,35 82,41`
const GROUNDS = `18,24 16,47 0,57 10,45 41,53 109,52 128,44`
const STUBS = `18,13 18,24|0,39 0,57|5,48 5,56|16,45 16,47|22,53 22,71|41,45 41,53|25,7 25,14|29,61 29,71|109,38 109,52|71,10 71,25|72,50 72,65
75,32 75,44|82,32 82,44|84,23 84,25|100,10 101,10|93,18 94,18|92,58 94,58|41,34 48,34|27,25 27,32|38,25 38,32|31,7 31,15|48,7 48,15|48,24 48,29
48,47 48,51|18,7 18,12|22,42 22,49|34,42 34,49|34,63 34,71|48,63 48,71|41,64 41,71|67,30 67,36|67,40 67,46|96,31 96,45|103,31 103,45|82,0 82,6
82,70 82,76|4,38 11,38|54,38 62,38|87,10 93,10|87,18 94,18|87,27 93,27|87,29 93,29|87,47 93,47|87,49 93,49|87,58 94,58|87,64 93,64|113,38 119,38
122,38 128,38|122,43 128,43|108,0 111,0|112,0 117,0|108,76 111,76|112,76 117,76|10,44 10,45|128,43 128,44`

// transistors: x of the collector/emitter column, y of the base, facing (1: base on the left), arrow end (-1: top)
const BJTS: [number, number, 1 | -1, 1 | -1][] = [
    [31, 17, 1, -1], [48, 17, 1, -1], [54, 24, 1, 1], [57, 27, 1, 1], [64, 27, 1, 1], [64, 9, -1, -1], [71, 9, 1, -1],
    [78, 12, 1, 1], [78, 22, 1, -1], [71, 27, -1, 1], [27, 34, 1, -1], [38, 34, -1, -1], [22, 40, 1, 1], [34, 40, -1, 1],
    [34, 61, 1, 1], [48, 61, 1, 1], [54, 52, 1, -1], [57, 49, 1, -1], [64, 49, 1, -1], [72, 49, -1, -1], [78, 54, 1, 1],
    [78, 64, 1, -1], [72, 67, 1, 1], [64, 67, -1, 1],
]
const FETS = `96,17 103,9 96,59 103,65`

const LABELS: [string, number, number][] = [
    ['BZX84C2V4', 20.7, 5.7], ['C12', 13.8, 11], ['1u', 14.8, 14], ['D3', 25.8, 9.5], ['470', 32.2, 9.5], ['R35', 32.4, 12],
    ['R3', 44.2, 9.5], ['470', 44.2, 11.5], ['Q6', 25.7, 16], ['Q1', 48.9, 17.8], ['27k', 12.9, 19.3], ['R57', 12.9, 21.5],
    ['Q32', 54.7, 22.5], ['47', 28.7, 27.3], ['R12', 28.7, 29.3], ['R37', 39.2, 27.5], ['47', 39.4, 29.5], ['D9', 49.4, 28.3],
    ['C23', 42.4, 32.3], ['Q10', 57.4, 27.5], ['Q11', 63.9, 27.5], ['Q7', 27.9, 34.8], ['Q4', 34.7, 34.8], ['R1', 4.4, 36.4],
    ['1k', 7.8, 36.4], ['C1', 1.2, 40.3], ['10u', 0.8, 43], ['R2', 17.2, 43.3], ['20k', 16.9, 45], ['Q3', 23.2, 40.5],
    ['Q8', 30.7, 40.5], ['R33', 23.4, 45.8], ['47', 23.1, 47.8], ['R39', 29.4, 45.8], ['47', 30.4, 47.8], ['R7', 42.7, 42.8],
    ['620', 41.9, 44.5], ['12p', 42.4, 36.8], ['D10', 48.8, 48], ['C24', 36.4, 50.3], ['1000u', 34.8, 53], ['20k', 57.2, 36.8],
    ['R9', 57.2, 40.5], ['R40', 62.8, 42.5], ['9k', 63.4, 44.3], ['Q9', 57.7, 50.3], ['Q12', 63.9, 49.8], ['Q31', 54.9, 55],
    ['V2', 6.8, 49], ['V1', 1.5, 55.3], ['27k', 17.9, 57.5], ['R58', 17.9, 59.8], ['Q5', 29.9, 59], ['Q2', 48.9, 61.5],
    ['C18', 17.9, 65], ['1u', 18.5, 68], ['R4', 35.9, 67.8], ['470', 35.4, 69.8], ['R60', 42.2, 67.8], ['50k', 42.2, 69.8],
    ['R5', 49.2, 67.5], ['470', 49.2, 69.3], ['D2', 30.2, 70.3], ['BZX84C2V4', 25.9, 73.5], ['Q26', 61.1, 67.5],
    ['V5', 107.7, -1.3], ['40v', 111.2, -1.5], ['R46', 83.4, 2.5], ['4k', 83, 4.5], ['Q24', 60.9, 9.8], ['Q23', 70.9, 9.8],
    ['Q28', 77.4, 12.5], ['D1', 66.9, 15.8], ['D5', 66.9, 21.8], ['82', 88.9, 8.8], ['R55', 88.8, 12.5], ['R54', 88.3, 14.8],
    ['82', 88.2, 16.8], ['M4', 103.7, 9], ['M3', 96.7, 17], ['C17', 84.7, 20.5], ['100p', 84.7, 22.5], ['Q27', 77.9, 22.8],
    ['R47', 87.3, 25.3], ['910', 90.7, 25.3], ['R48', 87.3, 31.7], ['910', 90.7, 31.5], ['Q13', 68.2, 27.5], ['R8', 63.4, 32.8],
    ['9k', 63.9, 34.8], ['100u', 70.5, 34], ['C19', 71.2, 37.8], ['D4', 83.3, 37.3], ['R30', 97.3, 33.3], ['0.33', 97.7, 35.3],
    ['R51', 104.2, 33.3], ['0.33', 104.7, 35.3], ['L1', 113.5, 34], ['3u', 116.3, 34], ['RL', 124.3, 36.5], ['100u', 70.5, 40],
    ['C20', 71.2, 43.8], ['D8', 83.3, 40.3], ['R31', 97.3, 41.8], ['0.33', 97.7, 43.8], ['R52', 104.2, 41.8], ['0.33', 104.7, 43.8],
    ['R32', 110.8, 42.8], ['10', 110.8, 44.5], ['10', 115.5, 40.8], ['R56', 115.3, 42.5], ['4', 124.3, 40.5], ['R59', 123.5, 42],
    ['8', 124.8, 45.5], ['R50', 86.9, 45.5], ['910', 90.9, 45.8], ['Q14', 68.9, 49.8], ['R49', 87.3, 51.8], ['910', 90.9, 51.8],
    ['c11', 110.8, 47.8], ['0.068u', 109.9, 50.3], ['Q30', 77.4, 54.5], ['100p', 84.7, 54], ['C21', 84.9, 56.3], ['82', 88.9, 56.8],
    ['R15', 88.8, 60.5], ['D6', 67.9, 55.8], ['D7', 67.9, 61.8], ['X1', 96.7, 60.5], ['82', 88.9, 62.8], ['R53', 88.8, 66.5],
    ['Q29', 77.9, 64.8], ['Q25', 72, 67.5], ['X2', 103.7, 66.5], ['R14', 83.4, 72.3], ['4k', 83.4, 74], ['V6', 108.4, 74.5],
    ['40v', 111.2, 74.5],
]
const NODES: [string, number, number][] = [['In', 0.1, 46.1], ['nfb', 46, 38], ['out', 119, 36]]

const points = (s: string) =>
    s
        .split(/\s+/)
        .filter(Boolean)
        .map((p) => p.split(',').map((n) => Number(n) * U))

const polyPath = (s: string) =>
    s
        .split(/[|\n]/)
        .map((line) => 'M' + points(line).map((p) => p.join(' ')).join('L'))
        .join('')

function Schematic() {
    return (
        <svg className="block h-full w-full" aria-label="Gladki-univer-5-fin">
            <text x="160" y="14" fontSize="13" fill="#0000c0" className="font-['Open_Sans','Noto_Sans',sans-serif]">
                Gladki-univer-5-fin
            </text>
            <g transform="translate(44.5 52.5)" fill="none">
                <g shapeRendering="crispEdges">
                    <path d={polyPath(WIRES)} stroke={WIRE} />
                    <path d={polyPath(STUBS)} stroke={PART} />
                </g>
                <g stroke={PART}>
                    {points(RES_V).map(([x, y], i) => (
                        <rect key={i} x={x - 2} y={y - 6} width="4" height="12" fill="#fff" />
                    ))}
                    {points(RES_H).map(([x, y], i) => (
                        <rect key={i} x={x - 6} y={y - 2} width="12" height="4" fill="#fff" />
                    ))}
                    {points(CAP_V).map(([x, y], i) => (
                        <g key={i}>
                            <path d={`M${x} ${y}v1`} stroke="#fff" strokeWidth="2" />
                            <path d={`M${x - 4} ${y - 1}h9M${x - 4} ${y + 1}h9`} />
                        </g>
                    ))}
                    {points(DIODE_DOWN).map(([x, y], i) => (
                        <path key={i} d={`M${x - 4} ${y - 2}h8l-4 4zM${x - 4} ${y + 3}h8M${x - 2} ${y + 2}h4`} fill={PART} />
                    ))}
                    {points(DIODE_UP).map(([x, y], i) => (
                        <path key={i} d={`M${x - 4} ${y + 2}h8l-4-4zM${x - 4} ${y - 3}h8M${x - 2} ${y - 2}h4`} fill={PART} />
                    ))}
                    {points(GROUNDS).map(([x, y], i) => (
                        <path key={i} d={`M${x - 4} ${y + 1}h9M${x - 2} ${y + 4}h5`} />
                    ))}
                    <path d="M84 212h9M86 209h5" />
                    {BJTS.map(([cx, cy, face, end], i) => {
                        const x = cx * U
                        const y = cy * U
                        const bar = x - 4 * face
                        return (
                            <g key={i}>
                                <path d={`M${x - 11 * face} ${y}H${bar}M${x} ${y - 11}v4L${bar} ${y - 3}M${x} ${y + 11}v-4L${bar} ${y + 3}`} />
                                <path d={`M${bar} ${y - 6}v12`} strokeWidth="2" />
                                {end === 1 ? (
                                    <path d={`M${x} ${y + 8}l${-4 * face} -1l${3 * face} -3z`} fill={PART} />
                                ) : (
                                    <path d={`M${bar} ${y - 3}l${4 * face} -1l${-1 * face} -3z`} fill={PART} />
                                )}
                            </g>
                        )
                    })}
                    {points(FETS).map(([x, y], i) => (
                        <g key={i}>
                            <path d={`M${x - 7} ${y - 5}v10M${x - 5} ${y - 6}v4M${x - 5} ${y - 2}v4M${x - 5} ${y + 2}v5M${x - 5} ${y - 4}h5v-8M${x - 5} ${y}h5M${x - 5} ${y + 5}h5v7M${x} ${y}v5`} />
                            <path d={`M${x - 4} ${y}l3-2v4z`} fill={PART} />
                        </g>
                    ))}
                    {/* coupling capacitor C23 */}
                    <path d="M176 136h1" stroke="#fff" strokeWidth="2" />
                    <path d="M175 132v9M178 132v9" />
                    {/* sources V1, V2 */}
                    <circle cx="0" cy="204" r="5" fill="#fff" />
                    <path d="M-3 205c1-4 2-4 3-1s2 3 3-1M3 196h3M4 194v3M3 213h3" />
                    <circle cx="20" cy="204" r="5" fill="#fff" />
                    <path d="M17 206h3v-4h3M23 196h3M24 194v3M23 213h3" />
                    {/* supplies V5, V6 */}
                    <path d="M443 -4v9M445 -2v5M467 -4v9M470 -3v7M443 302v5M445 300v9M468 300v9M471 301v7" />
                    {/* output coil */}
                    <path d="M452 144v-2c0-5 3-5 4-2v2c0-7 5-7 5 0c-1 1-1 0 0-2c0-5 5-5 5 0v2c-1 0-1-1 0-2c0-5 5-5 5 0v2c0-7 5-7 5 0v2" />
                    <path d="M454 148h3M455 146v3M472 147h3" />
                </g>
                <path
                    d={points(DOTS)
                        .map(([x, y]) => `M${x - 1.5} ${y}h3M${x} ${y - 1.5}v3`)
                        .join('')}
                    stroke="#e01010"
                />
                <g fontSize="6" fill="#006400" stroke="#006400" strokeWidth=".2" className="font-['DejaVu_Sans',sans-serif]">
                    {LABELS.map(([label, x, y], i) => (
                        <text key={i} x={x * U} y={y * U}>
                            {label}
                        </text>
                    ))}
                    {NODES.map(([label, x, y]) => (
                        <text key={label} x={x * U} y={y * U} fill={PART} stroke={PART}>
                            {label}
                        </text>
                    ))}
                </g>
            </g>
        </svg>
    )
}

/* ---------- plots ---------- */

const AXIS = '#0000c0'

interface PlotFrameProps {
    width: number
    rows: string[]
    dashes: number[]
}

function PlotFrame({ width, rows, dashes }: PlotFrameProps) {
    const height = 719
    return (
        <g>
            <g stroke="#808080" fill="none" shapeRendering="crispEdges">
                {rows.slice(1, -1).map((_, i) => (
                    <path key={i} d={`M0 ${Math.round(((i + 1) * height) / (rows.length - 1))}h${width}`} strokeDasharray="4 3" />
                ))}
                {dashes.map((x) => (
                    <path key={x} d={`M${x} 0v${height}`} strokeDasharray="4 4" />
                ))}
                <rect width={width} height={height} />
            </g>
            {rows.map((label, i) => (
                <text key={label} x="-3" y={Math.round((i * height) / (rows.length - 1)) + 4} textAnchor="end">
                    {label}
                </text>
            ))}
        </g>
    )
}

// length of the doubled stroke below every crest
const SHOULDERS = [120, 13, 16, 140, 24, 16, 130, 25, 8, 150, 40, 8, 5, 39, 3, 5, 44, 130, 12, 31]

function WavePlot() {
    const wave = SHOULDERS.map((s, i) => {
        const x = 1 + Math.round(i * 5.35)
        return `${x},184 ${x + 1},${184 + s} ${x + 1},${250 + s} ${x + 2},430 ${x + 2},679 ${x + 3},${679 - s} ${x + 4},420 ${x + 5},${200 + s}`
    }).join(' ')
    return (
        <svg className="block h-full w-full font-['Liberation_Sans',Arial,sans-serif]" fontSize="10" fill={AXIS}>
            <g transform="translate(23.5 17.5)">
                <text x="0" y="-4">
                    Gladki-универ-фин-5.C
                </text>
                <PlotFrame width={107} rows={['60', '40', '20', '0', '-20', '-40']} dashes={[21, 43, 64, 86]} />
                <polyline points={wave} fill="none" stroke="#0000b0" shapeRendering="crispEdges" />
                <text x="0" y="730">1.0m</text>
                <text x="31" y="730">1.4m</text>
                <text x="95" y="730">2.0m</text>
                <text x="0" y="743" textDecoration="underline">v(OUT) (V)</text>
                <text x="-14" y="756">t (Secs)</text>
            </g>
        </svg>
    )
}

const TRACES = [
    // start-up ringing
    '45,431 46,413 45,460 47,425 46,448 49,465 51,414 52,440 54,487 55,418 57,370 58,432 60,420 63,438 65,426 67,448 70,430 73,442 74,426 78,428 80,511 82,436 88,495 92,478 97,500',
    '45,440 48,455 50,425 53,430 56,420 59,433 61,422 66,436 69,440 72,430 76,452 80,466 84,440 90,480 97,506 110,528 133,451',
    '60,430 64,425 68,446 72,428 78,460 83,438 86,450 99,500 110,532 134,451 180,446',
    '62,432 66,440 70,432 75,450 80,464 88,470 94,500 102,496 110,520 133,450',
    '64,430 70,444 74,432 80,466 84,442 96,498 110,526 132,452 180,446',
    '66,434 72,436 79,464 90,468 100,505 110,503 128,470 142,451 200,444',
    '70,430 76,456 82,440 89,439 103,481 125,477 136,466 152,450 200,444',
    '72,433 80,466 83,445 99,513 105,500 121,480 138,461 147,450',
    '76,450 84,468 89,494 104,479 122,473 142,453 160,449',
    '80,465 97,502 112,498 130,470 145,451',
    '98,506 104,496 118,484 134,463 140,452',
    '61,424 68,442 74,436 79,458 81,462 97,498 110,524 133,450',
    '63,434 69,438 73,444 80,462 95,490 109,516 126,478',
    '82,463 97,460 177,451 209,386 241,394 266,388 284,430',
    '110,526 133,451 289,435',
    '109,522 132,452 289,436',
    // crossover spike, negative side
    '269,435 279,382 286,335 289,275 290,182 290,436',
    '268,436 280,376 287,323 290,241 291,436',
    '271,436 281,368 286,330 288,290 289,436',
    '274,436 284,350 288,300 287,436',
    '277,436 285,345 288,310 284,436',
    '280,436 286,340 290,260 286,436',
    '262,436 276,393 283,360 282,434',
    '264,435 282,428 291,432',
    '246,437 291,434',
    // around zero
    '285,430 292,426 310,409 320,413 328,433 332,440 338,432 342,440 348,417 355,415 365,432 371,439',
    '291,435 291,447 293,430 302,453 308,428 313,432 324,423 336,455 345,435 357,453 369,441 389,472 419,476 447,472 478,413 570,406 585,394 596,398 604,413 608,435',
    '292,433 294,431 302,452 309,434 313,427 318,431 324,424 336,453 345,436 357,452 369,442 390,472 419,474 448,466 478,414 569,407 584,395 597,399 605,416 608,432',
    '293,433 302,454 306,436 311,430 318,432 323,427 336,456 344,437 356,452 370,440',
    '302,453 307,432 315,434 324,425 337,454 345,436 357,453 369,440 389,471 418,472 451,461 476,417',
    '371,441 389,472 419,477 434,471 452,461 479,413',
    '389,471 447,474 478,413 605,397 608,399 608,435',
    '388,472 419,475 448,473 477,414',
    '394,473 430,472 451,463',
    // crossover spike, positive side
    '365,431 365,679 367,600 369,540 373,432',
    '364,431 365,679 368,591 370,500 374,440',
    '365,431 366,629 371,492 371,431',
    '366,431 366,560 372,470 369,431',
    '363,432 365,460 367,431 479,417 605,397',
    '369,432 391,430 480,417',
    '373,434 388,430 420,426',
]

function DistortionPlot() {
    return (
        <svg className="block h-full w-full font-['Liberation_Sans',Arial,sans-serif]" fontSize="10" fill={AXIS}>
            <g transform="translate(26.5 17.5)">
                <text x="408" y="-4" textAnchor="middle">
                    Gladki-универ-фин-5.CIR del
                </text>
                <PlotFrame width={817} rows={['1.2', '0.8', '0.4', '0.0', '-0.4', '-0.8']} dashes={[163, 327, 490, 654]} />
                <text x="228" y="115" fontSize="15" fill="#000080">
                    Искажение амплитудной характеристики УНЧ %
                </text>
                <g fill="none" stroke="#007a00" shapeRendering="crispEdges">
                    {TRACES.map((t) => (
                        <polyline key={t} points={t} />
                    ))}
                </g>
                <g textAnchor="middle">
                    <text x="7" y="730">-40</text>
                    <text x="163" y="730">-20</text>
                    <text x="327" y="730">0</text>
                    <text x="490" y="730">20</text>
                    <text x="654" y="730">40</text>
                    <text x="817" y="730">60</text>
                    <text x="357" y="756">V(OUT) (V)</text>
                </g>
                <text x="0" y="743" fill="#007a00">
                    100*del(del(v(nfb)-V(IN)))/1
                </text>
            </g>
        </svg>
    )
}

/* ---------- windows ---------- */

function WindowButtons() {
    const box = 'flex h-[17px] w-[30px] items-center justify-center rounded-[2px] border border-[#8a9bb0] bg-[#c9d7e6]'
    return (
        <div className="flex gap-[3px]">
            <button aria-label="Minimize" className={box}>
                <svg width="12" height="10">
                    <rect x="1.5" y="5.5" width="9" height="3" rx="1" fill="#fff" stroke="#5b6673" />
                </svg>
            </button>
            <button aria-label="Restore" className={box}>
                <svg width="12" height="10">
                    <rect x="1.5" y=".5" width="9" height="8" rx="1" fill="#fff" stroke="#5b6673" />
                    <rect x="4.5" y="3.5" width="3" height="2" fill="#c9d7e6" stroke="#5b6673" />
                </svg>
            </button>
            <button aria-label="Close" className={box}>
                <svg width="12" height="10">
                    <path d="M2 1l8 8M10 1L2 9" stroke="#5b6673" strokeWidth="4" />
                    <path d="M2.5 1.5l7 7M9.5 1.5l-7 7" stroke="#fff" strokeWidth="1.8" />
                </svg>
            </button>
        </div>
    )
}

function MdiWindow({ title, icon, children }: { title: string; icon: ReactNode; children: ReactNode }) {
    return (
        <section className="flex min-w-0 flex-col rounded-t-[6px] border border-[#3f474f] bg-[#d7e4f2] px-[7px] pb-[9px]">
            <header className="-mx-[7px] flex h-[29px] shrink-0 items-center rounded-t-[5px] bg-linear-to-b from-[#bdccda] to-[#d7e4f2] px-[9px] pt-[5px]">
                <svg width="16" height="16" className="shrink-0">
                    {icon}
                </svg>
                <h2 className="ml-1 min-w-0 flex-1 truncate text-xs text-[#4a4f55]">{title}</h2>
                <WindowButtons />
            </header>
            <div className="flex min-h-0 flex-1 flex-col bg-[#f0f0f0]">{children}</div>
        </section>
    )
}

const RAISED = 'border border-t-white border-r-[#696969] border-b-[#696969] border-l-white bg-[#f0f0f0]'

const NAV: Record<string, string> = {
    'Sheet list': 'M3 5h6L6 8z',
    'First sheet': 'M3 1h1v9H3zM9 1v9L4.500 5.500z',
    'Previous sheet': 'M8 1v9L4 5.500z',
    'Next sheet': 'M4 1v9l4-4.500z',
    'Last sheet': 'M9 1h1v9H9zM3 1v9l5-4.500z',
}

function NavButtons({ list }: { list?: boolean }) {
    return (
        <div className="flex h-4 shrink-0 border border-[#696969] border-b-0">
            {Object.entries(NAV)
                .slice(list ? 0 : 1)
                .map(([label, d]) => (
                    <button key={label} aria-label={label} className={clsx('flex w-4 items-center justify-center', RAISED)}>
                        <svg width="12" height="11" className="shrink-0">
                            <path d={d} />
                        </svg>
                    </button>
                ))}
        </div>
    )
}

function Slant({ d }: { d: string }) {
    return (
        <svg width="9" height="16" className="shrink-0">
            <path d={d} fill="none" stroke="#000" />
        </svg>
    )
}

function SheetTabs({ tabs }: { tabs: string[] }) {
    return (
        <div className="flex shrink-0">
            <Slant d="M1 0l6 15.5h2" />
            {tabs.map((tab, i) => (
                <div key={tab} className="flex">
                    <button
                        className={clsx(
                            "h-4 border-b border-black font-['Liberation_Sans',Arial,sans-serif]",
                            i === 0 ? 'bg-white text-xs leading-4 font-bold' : 'border-t bg-[#f0f0f0] px-[2px] text-[11px] leading-[15px]',
                        )}
                    >
                        {tab}
                    </button>
                    <Slant d={i === tabs.length - 1 ? 'M0 15.5L7 .5h2' : 'M0 15.5h1L7 .5h2M4 7l4 8.5h1'} />
                </div>
            ))}
        </div>
    )
}

function ScrollArrow({ label, d }: { label: string; d: string }) {
    return (
        <button aria-label={label} className={clsx('flex size-4 shrink-0 items-center justify-center', RAISED)}>
            <svg width="8" height="8">
                <path d={d} />
            </svg>
        </button>
    )
}

function CircuitWindow() {
    return (
        <MdiWindow
            title="D:\MC11\DATA\Audio Amplifiers\Asglad\Gladki-универ-фин-5.CIR"
            icon={
                <>
                    <rect width="16" height="16" fill="#101060" />
                    <path d="M1 1h14v14H1z" fill="#c4ceec" />
                    <path d="M1 5h5v4h4V2M5 9v6M10 9h5M6 12h8M12 3v9" stroke="#2030b0" fill="none" />
                    <path d="M11 4h3M2 7h2M7 12h2" stroke="#d02020" strokeWidth="2" />
                    <path d="M15 15h-5l5-5z" fill="#101060" />
                </>
            }
        >
            <ToolRows rows={CIRCUIT_BARS} />
            <div className="flex min-h-0 flex-1 border-t-2 border-l-2 border-[#696969]">
                <div className="min-w-0 flex-1 bg-white">
                    <Schematic />
                </div>
                <div className="flex w-4 flex-col bg-[#f7f7f7]">
                    <div className={clsx('h-[5px]', RAISED)} />
                    <ScrollArrow label="Scroll up" d="M0 6h8L4 2z" />
                    <div className={clsx('basis-[363px]', RAISED)} />
                    <div className="flex-1" />
                    <ScrollArrow label="Scroll down" d="M0 2h8L4 6z" />
                </div>
            </div>
            <div className="flex h-4 shrink-0 border-l-2 border-[#696969] pl-[3px]">
                <NavButtons />
                <SheetTabs tabs={['Main', 'Text', 'Models', 'Info']} />
                <div className="mr-[2px] min-w-0 flex-[175] border-t border-r-2 border-black" />
                <div className="flex min-w-0 flex-[170] bg-[#f7f7f7]">
                    <ScrollArrow label="Scroll left" d="M6 0v8L2 4z" />
                    <div className={clsx('w-[57px]', RAISED)} />
                    <div className="flex-1" />
                    <ScrollArrow label="Scroll right" d="M2 0v8l4-4z" />
                </div>
                <div className="w-4" />
            </div>
        </MdiWindow>
    )
}

function PlotPane({ tabs, lead, children }: { tabs: string[]; lead?: boolean; children: ReactNode }) {
    return (
        <div className="flex h-full min-w-0 flex-col overflow-hidden border-t-2 border-l-2 border-[#696969]">
            <div className="min-h-0 flex-1 bg-white">{children}</div>
            <div className={clsx('flex h-4 shrink-0', lead && 'pl-[5px]')}>
                <NavButtons list />
                <SheetTabs tabs={tabs} />
                <div className="flex-1 border-t border-black" />
            </div>
        </div>
    )
}

function AnalysisWindow() {
    return (
        <MdiWindow
            title="Transient Analysis"
            icon={
                <>
                    <rect width="16" height="16" fill="#000" />
                    <path d="M1 1h14v3H1z" fill="#000080" />
                    <path d="M1 4h14v11H1z" fill="#fff" />
                    <path d="M4.5 6.5h9v7h-9z" fill="#20d8d8" stroke="#000" />
                    <path d="M6 12c1-4 3-4 4-2s2 1 3 2" fill="none" stroke="#000" />
                    <path d="M2.500 5v9" stroke="#000" strokeDasharray="1 1" />
                </>
            }
        >
            <div className="pb-px">
                <ToolRows rows={ANALYSIS_BARS} />
            </div>
            <div className="grid min-h-0 flex-1 grid-cols-[160fr_874fr] gap-[5px]">
                <PlotPane tabs={['v(OUT)', 'de']} lead>
                    <WavePlot />
                </PlotPane>
                <PlotPane tabs={['del']}>
                    <DistortionPlot />
                </PlotPane>
            </div>
        </MdiWindow>
    )
}

/* ---------- application frame ---------- */

const MENU = ['File', 'Edit', 'Component', 'Windows', 'Options', 'Transient', 'Scope', 'Monte Carlo', 'Help']

function TitleBar() {
    return (
        <header className="relative flex h-[22px] shrink-0 items-center overflow-hidden border-b border-[#1c3a5e] bg-[linear-gradient(90deg,#b4cbe8_0%,#cfdef2_12%,#9fbfe2_17%,#3a74b4_20%,#2a66aa_33%,#3474b8_42%,#4484c6_54%,#3a78bc_62%,#1f5a9c_68%,#3a78bc_75%,#1c5596_80%,#2a66a8_92%,#3f77b4_100%)] pl-[2px]">
            {/* wallpaper seen through the glass */}
            <span className="absolute top-1 left-[325px] h-4 w-9 bg-[#a8d4f0] blur-[5px]" />
            <span className="absolute top-1 left-[397px] h-5 w-13 bg-[#cfe2f6] blur-[5px]" />
            <span className="absolute top-1 left-[472px] h-5 w-5 bg-[#dce9f8] blur-[5px]" />
            <span className="absolute top-2 left-[490px] h-3 w-6 bg-[#5a2b40] blur-[3px]" />
            <span className="absolute top-2 left-[555px] h-4 w-7 bg-[#e2f0fb] blur-[4px]" />
            <svg width="15" height="15" className="relative shrink-0">
                <circle cx="7.5" cy="7.5" r="6.5" fill="#4cc040" stroke="#e0b818" strokeWidth="2" />
                <path d="M4 5.5l1.500-1v6.500M8.500 5.500l1.500-1v6.500" stroke="#123a10" fill="none" strokeWidth="1.3" />
            </svg>
            <h1 className="relative ml-1 flex-1 text-xs text-black">Micro-Cap 11.0.1.2 (32 bit) - Transient Analysis</h1>
            <div className="relative mr-[5px] flex h-[18px] self-start rounded-b-[4px] border border-t-0 border-[#1f3f66] bg-[#5d8bbd] shadow-[inset_0_0_1px_#fff]">
                <button aria-label="Minimize" className="flex w-7 items-center justify-center border-r border-[#1f3f66]">
                    <svg width="14" height="10">
                        <rect x="1.5" y="4.5" width="11" height="4" rx="1" fill="#fff" stroke="#33475e" />
                    </svg>
                </button>
                <button aria-label="Restore" className="flex w-[27px] items-center justify-center border-r border-[#1f3f66]">
                    <svg width="14" height="12">
                        <path d="M4.5.5h8v8h-8z" fill="#fff" stroke="#33475e" />
                        <path d="M1.5 3.5h8v8h-8z" fill="#fff" stroke="#33475e" />
                        <path d="M4.5 6.5h2v2h-2z" fill="#5d8bbd" stroke="#33475e" />
                    </svg>
                </button>
                <button aria-label="Close" className="flex w-11 items-center justify-center">
                    <svg width="14" height="12">
                        <path d="M3 2l8 8M11 2l-8 8" stroke="#33475e" strokeWidth="4.5" />
                        <path d="M3.5 2.5l7 7M10.5 2.5l-7 7" stroke="#fff" strokeWidth="2.2" />
                    </svg>
                </button>
            </div>
        </header>
    )
}

export default function App() {
    return (
        <div className="flex h-screen flex-col overflow-hidden bg-white font-['Open_Sans','Noto_Sans',sans-serif]">
            <TitleBar />
            <nav className="flex h-5 shrink-0 items-center border-b border-[#a8a8b0] bg-linear-to-b from-white from-25% via-[#dde1f2] via-40% to-[#d3d8ec] pl-px">
                {MENU.map((item) => (
                    <button key={item} className="px-[6px] text-xs leading-4 text-[#6b6e78]">
                        {item}
                    </button>
                ))}
            </nav>
            <div className="flex h-[31px] shrink-0 border-t-2 border-b border-t-white border-b-[#a0a0a0] bg-linear-to-b from-white from-10% via-[#d5d9ec] via-35% to-[#d3d8ec]">
                {MAIN_BAR.map((group) => (
                    <div key={group} className="flex shrink-0 items-center border-r border-[#a0a0a0] bg-[#f0f0f0] pr-[3px] pl-1">
                        <Tools items={group} />
                    </div>
                ))}
            </div>
            <div className="flex min-h-0 flex-1 flex-col border-x border-[#9a9a9a] bg-[#f0f0f0]">
                <main className="mt-[3px] mr-[5px] ml-1 grid min-h-0 flex-1 grid-cols-[609fr_1056fr] border-2 border-t-[#696969] border-r-[#e8e8e8] border-b-white border-l-[#696969] bg-[#7a828a]">
                    <CircuitWindow />
                    <AnalysisWindow />
                </main>
                <div className="mt-[3px] flex h-[26px] shrink-0 items-start border-t-2 border-[#696969] font-['Liberation_Sans',Arial,sans-serif] text-[11px] text-black">
                    <button className="-mt-[2px] ml-[2px] h-6 border-r-2 border-b-2 border-[#696969] bg-[#f0f0f0] px-1 pt-1">
                        Transient Analysis
                    </button>
                    <button className="h-5 border-r-2 border-b-2 border-[#696969] px-[2px]">Gladki-универ-фин-5.CIR</button>
                </div>
            </div>
            <div className="flex h-[41px] shrink-0 justify-end">
                <div className="w-[5px] border-t-2 border-[#9fb4cc] bg-[#1b3c66]" />
            </div>
        </div>
    )
}
